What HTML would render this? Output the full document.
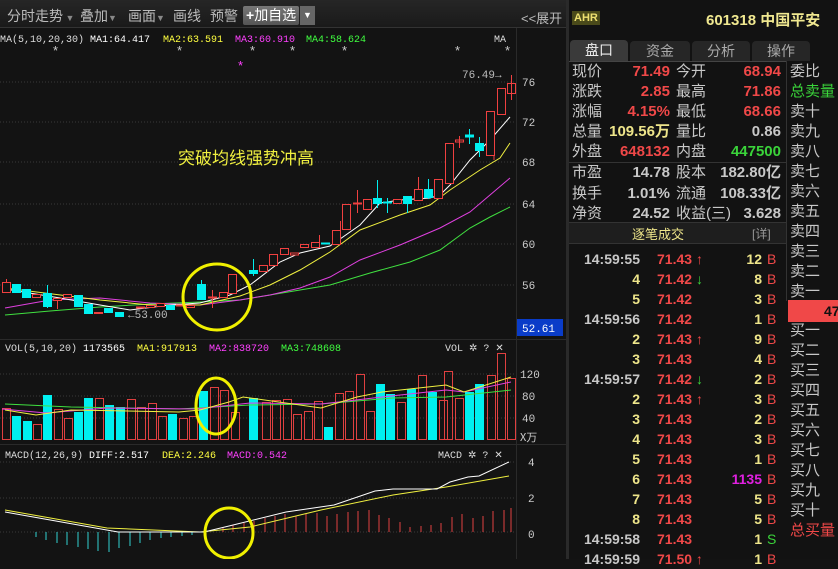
<!DOCTYPE html>
<html><head><meta charset="utf-8"><style>
*{margin:0;padding:0;box-sizing:border-box}
body{width:838px;height:559px;background:#131313;overflow:hidden;position:relative;font-family:"Liberation Sans","Noto Sans CJK SC",sans-serif;}
.a{position:absolute;white-space:nowrap}
#tb{left:0;top:0;width:566px;height:28px;background:linear-gradient(#262626,#1a1a1a);border-bottom:1px solid #333}
#rp{left:566px;top:0;width:272px;height:559px;background:#121212;border-left:3px solid #2a2a2a}
.t{font-size:14px;color:#bbb}
.lab{font-size:15px;color:#c8c8c8}
.v{font-size:15px;font-weight:bold;text-align:right}
.r{color:#f04848}.y{color:#eee58a}.g{color:#3ad43a}.w{color:#c8c8c8}
</style></head><body>
<div class="a" id="tb"></div>
<div class="a t" style="left:7px;top:6px;color:#bbb">分时走势<span style="font-size:9px;color:#888"> ▼</span></div>
<div class="a t" style="left:80px;top:6px">叠加<span style="font-size:9px;color:#888">▼</span></div>
<div class="a t" style="left:128px;top:6px">画面<span style="font-size:9px;color:#888">▼</span></div>
<div class="a t" style="left:173px;top:6px">画线</div>
<div class="a t" style="left:210px;top:6px">预警</div>
<div class="a" style="left:243px;top:6px;width:56px;height:19px;background:linear-gradient(#777,#555);border-radius:2px;color:#fff;font-size:14px;line-height:19px;padding-left:3px"><b>+</b>加自选</div>
<div class="a" style="left:300px;top:6px;width:15px;height:19px;background:#666;color:#fff;font-size:9px;line-height:19px;text-align:center">▼</div>
<div class="a t" style="left:521px;top:8px;font-size:13px">&lt;&lt;展开</div>

<svg class="a" style="left:0;top:28px" width="566" height="531" viewBox="0 28 566 531">
<g stroke="#2a2a2a"><line x1="516.5" y1="28" x2="516.5" y2="559"/><line x1="0" y1="339.5" x2="566" y2="339.5"/><line x1="0" y1="444.5" x2="566" y2="444.5"/></g>
<g stroke="#3a3a3a" stroke-dasharray="1,2">
<line x1="0" y1="82" x2="516" y2="82"/><line x1="0" y1="122" x2="516" y2="122"/><line x1="0" y1="162" x2="516" y2="162"/><line x1="0" y1="204" x2="516" y2="204"/><line x1="0" y1="244" x2="516" y2="244"/><line x1="0" y1="285" x2="516" y2="285"/>
<line x1="0" y1="374" x2="516" y2="374"/><line x1="0" y1="396" x2="516" y2="396"/><line x1="0" y1="418" x2="516" y2="418"/>
<line x1="0" y1="462" x2="516" y2="462"/><line x1="0" y1="498" x2="516" y2="498"/><line x1="0" y1="532" x2="516" y2="532"/>
</g>
<g font-family="Liberation Mono,monospace" font-size="10">
<text x="0" y="42" fill="#ddd">MA(5,10,20,30)</text><text x="90" y="42" fill="#fff">MA1:64.417</text>
<text x="163" y="42" fill="#ffff40">MA2:63.591</text><text x="235" y="42" fill="#ff40ff">MA3:60.910</text><text x="306" y="42" fill="#40ff40">MA4:58.624</text>
<text x="494" y="42" fill="#ddd">MA</text>
<text x="5" y="351" fill="#ddd">VOL(5,10,20)</text><text x="83" y="351" fill="#fff">1173565</text><text x="137" y="351" fill="#ffff40">MA1:917913</text><text x="209" y="351" fill="#ff40ff">MA2:838720</text><text x="281" y="351" fill="#40ff40">MA3:748608</text>
<text x="445" y="351" fill="#ddd">VOL ✲ ? ✕</text>
<text x="5" y="458" fill="#ddd">MACD(12,26,9)</text><text x="89" y="458" fill="#fff">DIFF:2.517</text><text x="162" y="458" fill="#ffff40">DEA:2.246</text><text x="227" y="458" fill="#ff40ff">MACD:0.542</text>
<text x="438" y="458" fill="#ddd">MACD ✲ ? ✕</text>
</g>
<g fill="#ccc" font-size="13"><text x="53" y="55">*</text><text x="177" y="55">*</text><text x="250" y="55">*</text><text x="290" y="55">*</text><text x="342" y="55">*</text><text x="455" y="55">*</text><text x="505" y="55">*</text></g>
<text x="238" y="70" fill="#ff40ff" font-size="13">*</text>
<text x="178" y="164" fill="#f0f040" font-size="17" font-family="Noto Sans CJK SC,sans-serif">突破均线强势冲高</text>
<text x="462" y="78" fill="#bbb" font-size="11" font-family="Liberation Mono,monospace">76.49→</text>
<text x="128" y="318" fill="#bbb" font-size="11" font-family="Liberation Mono,monospace">←53.00</text>
<g fill="#ccc" font-size="11" font-family="Liberation Mono,monospace">
<text x="522" y="86">76</text><text x="522" y="126">72</text><text x="522" y="166">68</text><text x="522" y="208">64</text><text x="522" y="248">60</text><text x="522" y="289">56</text>
<text x="520" y="378">120</text><text x="522" y="400">80</text><text x="522" y="422">40</text><text x="520" y="441" font-family="Noto Sans CJK SC">X万</text>
<text x="528" y="466">4</text><text x="528" y="502">2</text><text x="528" y="538">0</text>
</g>
<rect x="517" y="319" width="46" height="17" fill="#0a3cc8"/><text x="522" y="332" fill="#fff" font-size="11" font-family="Liberation Mono,monospace">52.61</text>
<g fill="none" stroke-width="1">
<polyline stroke="#40e040" points="5,315 50,311 100,307 150,304 200,302 240,300 270,295 300,290 330,285 370,273 410,262 440,250 470,228 490,217 510,207"/>
<polyline stroke="#e040e0" points="5,308 50,300 100,298 150,303 200,305 240,300 270,295 300,288 330,277 360,260 400,245 440,228 470,212 490,195 510,178"/>
<polyline stroke="#f0f040" points="5,288 100,300 150,305 200,305 240,296 270,285 300,270 330,252 360,230 400,215 430,205 450,190 480,170 500,158 510,143"/>
<polyline stroke="#fff" points="5,289 60,298 100,305 130,310 170,305 200,303 230,295 250,285 280,262 300,253 330,246 360,225 380,203 400,200 430,198 440,195 450,185 470,160 490,140 510,117"/>
</g>
<g stroke="#f04040" fill="#131313">
<rect x="2.5" y="282.5" width="8" height="10"/><rect x="32.5" y="294.5" width="8" height="3"/><rect x="53.5" y="298.5" width="8" height="2"/><rect x="63.5" y="294.5" width="8" height="3"/><rect x="94.5" y="312.5" width="8" height="1"/><rect x="136.5" y="307" width="8" height="1"/><rect x="146.5" y="305.5" width="8" height="2"/><rect x="156.5" y="303.5" width="8" height="3"/><rect x="176.5" y="305" width="8" height="1"/><rect x="186.5" y="305.5" width="8" height="2"/>
<rect x="208.5" y="297" width="8" height="1"/><rect x="219.5" y="292.5" width="8" height="5"/><rect x="228.5" y="274.5" width="8" height="19"/><rect x="259.5" y="265.5" width="8" height="6"/><rect x="269.5" y="254.5" width="8" height="11"/><rect x="280.5" y="248.5" width="8" height="6"/><rect x="290.5" y="253" width="8" height="2"/><rect x="300.5" y="244.5" width="8" height="3"/><rect x="311.5" y="242.5" width="8" height="5"/><rect x="332.5" y="230.5" width="8" height="14"/><rect x="342.5" y="204.5" width="8" height="25"/><rect x="353.5" y="203" width="8" height="1"/><rect x="363.5" y="199.5" width="8" height="10"/><rect x="393.5" y="199.5" width="8" height="4"/><rect x="414.5" y="189.5" width="8" height="11"/><rect x="434.5" y="179.5" width="8" height="19"/><rect x="445.5" y="143.5" width="8" height="40"/><rect x="455.5" y="140" width="8" height="2"/><rect x="486.5" y="111.5" width="8" height="44"/><rect x="497.5" y="88.5" width="8" height="26"/><rect x="507.5" y="83.5" width="8" height="10"/>
<g fill="none"><line x1="6.5" y1="279" x2="6.5" y2="282"/><line x1="57.5" y1="300" x2="57.5" y2="309"/><line x1="212.5" y1="290" x2="212.5" y2="308"/><line x1="319.5" y1="235" x2="319.5" y2="242"/><line x1="340.5" y1="221" x2="340.5" y2="230"/><line x1="357.5" y1="190" x2="357.5" y2="213"/><line x1="418.5" y1="177" x2="418.5" y2="189"/><line x1="459.5" y1="136" x2="459.5" y2="148"/><line x1="511.5" y1="75" x2="511.5" y2="100"/><line x1="494" y1="155" x2="494" y2="160"/></g>
</g>
<g fill="#00f0f0" stroke="#00f0f0">
<rect x="12.5" y="284.5" width="8" height="8"/><rect x="22.5" y="289.5" width="8" height="8"/><rect x="43.5" y="293.5" width="8" height="13"/><rect x="74.5" y="295.5" width="8" height="11"/><rect x="84.5" y="304.5" width="8" height="9"/><rect x="104.5" y="308.5" width="8" height="4"/><rect x="115.5" y="312.5" width="8" height="4"/><rect x="166.5" y="305.5" width="8" height="4"/><rect x="197.5" y="284.5" width="8" height="15"/><rect x="249.5" y="270.5" width="8" height="3"/><rect x="321.5" y="243" width="8" height="1"/><rect x="373.5" y="198.5" width="8" height="5"/><rect x="383.5" y="202" width="8" height="1"/><rect x="403.5" y="196.5" width="8" height="7"/><rect x="424.5" y="189.5" width="8" height="8"/><rect x="465.5" y="135" width="8" height="2"/><rect x="475.5" y="143.5" width="8" height="7"/>
<line x1="47.5" y1="285" x2="47.5" y2="308"/><line x1="201.5" y1="280" x2="201.5" y2="299"/><line x1="253.5" y1="259" x2="253.5" y2="276"/><line x1="377.5" y1="180" x2="377.5" y2="208"/><line x1="387.5" y1="198" x2="387.5" y2="213"/><line x1="407.5" y1="196" x2="407.5" y2="213"/><line x1="428.5" y1="179" x2="428.5" y2="199"/><line x1="469.5" y1="129" x2="469.5" y2="144"/><line x1="479.5" y1="137" x2="479.5" y2="157"/>
</g>
<ellipse cx="217" cy="297" rx="34" ry="33" fill="none" stroke="#f0f000" stroke-width="3"/>
<g stroke="#e04040" fill="none">
<rect x="2.5" y="408.5" width="8" height="31"/><rect x="33.5" y="424.5" width="8" height="15"/><rect x="54.5" y="409.5" width="8" height="30"/><rect x="64.5" y="418.5" width="8" height="21"/><rect x="95.5" y="398.5" width="8" height="41"/><rect x="127.5" y="399.5" width="8" height="40"/><rect x="137.5" y="407.5" width="8" height="32"/><rect x="148.5" y="403.5" width="8" height="36"/><rect x="158.5" y="416.5" width="8" height="23"/><rect x="179.5" y="418.5" width="8" height="21"/><rect x="189.5" y="416.5" width="8" height="23"/><rect x="210.5" y="387.5" width="8" height="52"/><rect x="220.5" y="390.5" width="8" height="49"/><rect x="231.5" y="412.5" width="8" height="27"/><rect x="262.5" y="402.5" width="8" height="37"/><rect x="272.5" y="400.5" width="8" height="39"/><rect x="283.5" y="399.5" width="8" height="40"/><rect x="293.5" y="414.5" width="8" height="25"/><rect x="304.5" y="411.5" width="8" height="28"/><rect x="314.5" y="401.5" width="8" height="38"/><rect x="335.5" y="393.5" width="8" height="46"/><rect x="345.5" y="391.5" width="8" height="48"/><rect x="356.5" y="374.5" width="8" height="65"/><rect x="366.5" y="411.5" width="8" height="28"/><rect x="397.5" y="402.5" width="8" height="37"/><rect x="418.5" y="375.5" width="8" height="64"/><rect x="439.5" y="400.5" width="8" height="39"/><rect x="444.5" y="371.5" width="8" height="68"/><rect x="455.5" y="398.5" width="8" height="41"/><rect x="487.5" y="375.5" width="8" height="64"/><rect x="497.5" y="353.5" width="8" height="86"/><rect x="507.5" y="378.5" width="8" height="61"/>
</g>
<g fill="#00f0f0">
<rect x="12" y="416" width="9" height="24"/><rect x="23" y="421" width="9" height="19"/><rect x="43" y="395" width="9" height="45"/><rect x="74" y="412" width="9" height="28"/><rect x="84" y="398" width="9" height="42"/><rect x="105" y="405" width="9" height="35"/><rect x="116" y="407" width="9" height="33"/><rect x="168" y="414" width="9" height="26"/><rect x="199" y="391" width="9" height="49"/><rect x="249" y="398" width="9" height="42"/><rect x="324" y="427" width="9" height="13"/><rect x="376" y="384" width="9" height="56"/><rect x="386" y="394" width="9" height="46"/><rect x="407" y="389" width="9" height="51"/><rect x="428" y="392" width="9" height="48"/><rect x="475" y="384" width="9" height="56"/><rect x="465" y="392" width="9" height="48"/>
</g>
<g fill="none">
<polyline stroke="#40e040" points="5,404 71,407 179,409 250,405 321,404 393,398 446,397 511,390"/>
<polyline stroke="#e040e0" points="2,409 46,413 107,408 196,409 250,403 321,404 382,397 446,390 464,392 511,382"/>
<polyline stroke="#f0f040" points="5,410 36,415 71,410 179,412 200,410 229,402 243,397 321,408 357,397 382,392 446,385 464,392 511,377"/>
</g>
<ellipse cx="216" cy="406" rx="20" ry="28" fill="none" stroke="#f0f000" stroke-width="3"/>
<g stroke="#30d0d0">
<line x1="36" y1="532" x2="36" y2="537"/><line x1="46" y1="532" x2="46" y2="540"/><line x1="57" y1="532" x2="57" y2="543"/><line x1="67" y1="532" x2="67" y2="545"/><line x1="78" y1="532" x2="78" y2="547"/><line x1="88" y1="532" x2="88" y2="549"/><line x1="98" y1="532" x2="98" y2="551"/><line x1="109" y1="532" x2="109" y2="552"/><line x1="119" y1="532" x2="119" y2="548"/><line x1="130" y1="532" x2="130" y2="546"/><line x1="140" y1="532" x2="140" y2="543"/><line x1="150" y1="532" x2="150" y2="540"/><line x1="161" y1="532" x2="161" y2="538"/><line x1="171" y1="532" x2="171" y2="537"/><line x1="182" y1="532" x2="182" y2="536"/><line x1="192" y1="532" x2="192" y2="535"/>
</g>
<g stroke="#e04040">
<line x1="223" y1="532" x2="223" y2="527"/><line x1="233" y1="532" x2="233" y2="525"/><line x1="244" y1="532" x2="244" y2="523"/><line x1="254" y1="532" x2="254" y2="521"/><line x1="265" y1="532" x2="265" y2="518"/><line x1="275" y1="532" x2="275" y2="516"/><line x1="285" y1="532" x2="285" y2="514"/><line x1="296" y1="532" x2="296" y2="516"/><line x1="306" y1="532" x2="306" y2="514"/><line x1="317" y1="532" x2="317" y2="513"/><line x1="327" y1="532" x2="327" y2="516"/><line x1="337" y1="532" x2="337" y2="514"/><line x1="348" y1="532" x2="348" y2="512"/><line x1="358" y1="532" x2="358" y2="511"/><line x1="369" y1="532" x2="369" y2="510"/><line x1="379" y1="532" x2="379" y2="515"/><line x1="389" y1="532" x2="389" y2="518"/><line x1="400" y1="532" x2="400" y2="522"/><line x1="410" y1="532" x2="410" y2="527"/><line x1="421" y1="532" x2="421" y2="526"/><line x1="431" y1="532" x2="431" y2="525"/><line x1="441" y1="532" x2="441" y2="523"/><line x1="452" y1="532" x2="452" y2="517"/><line x1="462" y1="532" x2="462" y2="514"/><line x1="473" y1="532" x2="473" y2="518"/><line x1="483" y1="532" x2="483" y2="516"/><line x1="493" y1="532" x2="493" y2="511"/><line x1="504" y1="532" x2="504" y2="510"/><line x1="511" y1="532" x2="511" y2="508"/>
</g>
<polyline fill="none" stroke="#f0f040" points="5,510 107,528 200,532 250,527 321,510 393,495 446,487 509,476"/>
<polyline fill="none" stroke="#fff" points="5,512 118,532 204,532 229,526 286,512 334,505 375,491 393,489 437,489 450,482 468,477 479,476 509,462"/>
<ellipse cx="229" cy="533" rx="24" ry="25" fill="none" stroke="#f0f000" stroke-width="3"/>
</svg>

<div class="a" id="rp"></div>
<div class="a" style="left:572px;top:11px;background:#4a4a1a;color:#eee070;font-size:11px;font-weight:bold;padding:1px 2px">AHR</div>
<div class="a" style="left:706px;top:9px;color:#f0e890;font-size:15px;font-weight:bold">601318 中国平安</div>
<div class="a" style="left:570px;top:40px;width:58px;height:21px;background:#3a3a3a;color:#eee;font-size:14px;text-align:center;line-height:21px;border-radius:4px 4px 0 0">盘口</div>
<div class="a" style="left:630px;top:41px;width:60px;height:20px;background:#262626;color:#aaa;font-size:14px;text-align:center;line-height:20px;border-radius:4px 4px 0 0">资金</div>
<div class="a" style="left:692px;top:41px;width:58px;height:20px;background:#262626;color:#aaa;font-size:14px;text-align:center;line-height:20px;border-radius:4px 4px 0 0">分析</div>
<div class="a" style="left:752px;top:41px;width:58px;height:20px;background:#262626;color:#aaa;font-size:14px;text-align:center;line-height:20px;border-radius:4px 4px 0 0">操作</div>
<div class="a" style="left:569px;top:61px;width:217px;height:1px;background:#444"></div>
<div class="a" style="left:786px;top:61px;width:1px;height:240px;background:#333"></div>
<div class="a" style="left:569px;top:162px;width:217px;height:1px;background:#333"></div>

<div class="a lab" style="left:572px;top:62px;line-height:20px">现价<br>涨跌<br>涨幅<br>总量<br>外盘<br><span style="line-height:22px">市盈</span><br>换手<br>净资</div>
<div class="a v" style="left:600px;top:62px;width:70px;line-height:20px"><span class="r">71.49</span><br><span class="r">2.85</span><br><span class="r">4.15%</span><br><span class="y">109.56万</span><br><span class="r">648132</span><br><span class="w" style="line-height:22px">14.78</span><br><span class="w">1.01%</span><br><span class="w">24.52</span></div>
<div class="a lab" style="left:676px;top:62px;line-height:20px">今开<br>最高<br>最低<br>量比<br>内盘<br><span style="line-height:22px">股本</span><br>流通<br>收益(三)</div>
<div class="a v" style="left:700px;top:62px;width:81px;line-height:20px"><span class="r">68.94</span><br><span class="r">71.86</span><br><span class="r">68.66</span><br><span class="w">0.86</span><br><span class="g">447500</span><br><span class="w" style="line-height:22px">182.80亿</span><br><span class="w">108.33亿</span><br><span class="w">3.628</span></div>

<div class="a" style="left:569px;top:222px;width:217px;height:22px;background:#1e1e1e;border-top:1px solid #333;border-bottom:1px solid #333"></div>
<div class="a" style="left:632px;top:224px;color:#eee58a;font-size:13px">逐笔成交</div>
<div class="a" style="left:752px;top:225px;color:#999;font-size:12px">[详]</div>

<div class="a" style="left:790px;top:62px;font-size:15px;color:#c8c8c8;line-height:20px">委比<br><span class="g">总卖量</span><br>卖十<br>卖九<br>卖八<br>卖七<br>卖六<br>卖五<br>卖四<br>卖三<br>卖二<br>卖一</div>
<div class="a" style="left:788px;top:300px;width:50px;height:22px;background:#f04848;color:#111;font-weight:bold;font-size:14px;line-height:22px;padding-left:36px">47</div>
<div class="a" style="left:790px;top:321px;font-size:15px;color:#c8c8c8;line-height:20px">买一<br>买二<br>买三<br>买四<br>买五<br>买六<br>买七<br>买八<br>买九<br>买十<br><span class="r">总买量</span></div>

<div class="a v" style="left:572px;top:249px;width:68px;line-height:20px;font-size:14px;color:#c8c8c8">14:59:55<br><span class="y">4</span><br><span class="y">5</span><br>14:59:56<br><span class="y">2</span><br><span class="y">3</span><br>14:59:57<br><span class="y">2</span><br><span class="y">3</span><br><span class="y">4</span><br><span class="y">5</span><br><span class="y">6</span><br><span class="y">7</span><br><span class="y">8</span><br>14:59:58<br>14:59:59</div>
<div class="a" style="left:657px;top:249px;line-height:20px;font-size:14px;font-weight:bold;color:#f04848">71.43 <span>↑</span><br>71.42 <span class="g">↓</span><br>71.42<br>71.42<br>71.43 <span>↑</span><br>71.43<br>71.42 <span class="g">↓</span><br>71.43 <span>↑</span><br>71.43<br>71.43<br>71.43<br>71.43<br>71.43<br>71.43<br>71.43<br>71.50 ↑</div>
<div class="a v" style="left:715px;top:249px;width:47px;line-height:20px;font-size:14px;color:#eee58a">12<br>8<br>3<br>1<br>9<br>4<br>2<br>3<br>2<br>3<br>1<br><span style="color:#e020e0">1135</span><br>5<br>5<br>1<br>1</div>
<div class="a" style="left:767px;top:249px;line-height:20px;font-size:14px;color:#f04848">B<br>B<br>B<br>B<br>B<br>B<br>B<br>B<br>B<br>B<br>B<br>B<br>B<br>B<br><span class="g">S</span><br>B</div>
</body></html>
